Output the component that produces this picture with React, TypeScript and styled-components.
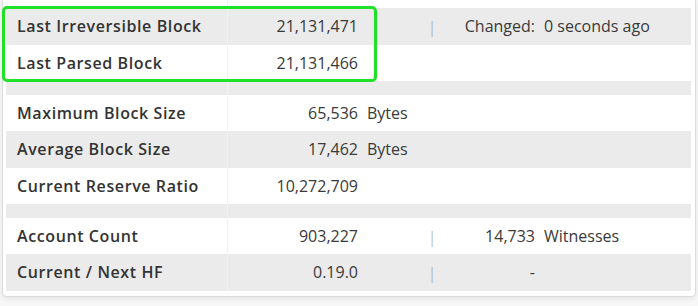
import * as React from 'react';
import styled, { createGlobalStyle } from 'styled-components';

const GlobalStyle = createGlobalStyle`
    body {
        margin: 0;
        background: #f7f7f7;
        font-family: 'Open Sans', 'Liberation Sans', sans-serif;
    }
`;

const Page = styled.div`
    position: relative;
    width: 698px;
    height: 306px;
    overflow: hidden;
    background: #f7f7f7;
`;

const Card = styled.div`
    margin-left: 2px;
    width: 685px;
    background: #fff;
    border: 1px solid #dcdcdc;
    border-top: none;
    border-radius: 0 0 5px 5px;
    box-shadow: 0 2px 4px rgba(0, 0, 0, 0.08);
    padding: 0 4px 5px 3px;
`;

const Row = styled.div<{ $shade?: boolean; $height?: number }>`
    display: grid;
    grid-template-columns: 222px 136px 60px 16px 100px 1fr;
    align-items: center;
    height: ${p => p.$height ?? 36.5}px;
    background: ${p => (p.$shade ? '#ebebeb' : '#fff')};
    font-size: 16px;
    color: #3a3a3a;
`;

const Label = styled.div`
    height: 100%;
    display: flex;
    align-items: center;
    padding-left: 11px;
    font-weight: 600;
    letter-spacing: 0.6px;
    color: #333;
    border-right: 1px solid #f2f2f2;
`;

const Value = styled.div`
    text-align: right;
    padding-right: 6px;
    white-space: nowrap;
`;

const Unit = styled.div`
    padding-left: 3px;
    white-space: nowrap;
`;

const Sep = styled.div`
    text-align: center;
    color: #a0a0a0;
    font-weight: 300;
    padding-top: 2px;
`;

const Value2 = styled.div`
    text-align: right;
    padding-right: 5px;
    white-space: nowrap;
`;

const Unit2 = styled.div`
    padding-left: 4px;
    white-space: nowrap;
`;

const Highlight = styled.div`
    position: absolute;
    left: 2px;
    top: 6px;
    width: 369px;
    height: 70px;
    border: 3px solid #20e028;
    border-radius: 5px;
    pointer-events: none;
`;

interface Item {
    label?: string;
    value?: string;
    unit?: string;
    sep?: boolean;
    value2?: string;
    unit2?: string;
    spacer?: boolean;
}

const items: Item[] = [
    { label: 'Last Irreversible Block', value: '21,131,471', sep: true, value2: 'Changed:', unit2: '0 seconds ago' },
    { label: 'Last Parsed Block', value: '21,131,466' },
    { spacer: true },
    { label: 'Maximum Block Size', value: '65,536', unit: 'Bytes' },
    { label: 'Average Block Size', value: '17,462', unit: 'Bytes' },
    { label: 'Current Reserve Ratio', value: '10,272,709' },
    { spacer: true },
    { label: 'Account Count', value: '903,227', sep: true, value2: '14,733', unit2: 'Witnesses' },
    { label: 'Current / Next HF', value: '0.19.0', sep: true, value2: '-' },
];

export default function App() {
    return (
        <Page>
            <GlobalStyle />
            <Card>
                <Row $height={8}>
                    <Label />
                </Row>
                {items.map((el, index) =>
                    el.spacer ? (
                        <Row key={index} $shade $height={13.5}>
                            <Label />
                        </Row>
                    ) : (
                        <Row key={index} $shade={index % 4 === 0}>
                            <Label>{el.label}</Label>
                            <Value>{el.value}</Value>
                            <Unit>{el.unit}</Unit>
                            <Sep>{el.sep ? '|' : ''}</Sep>
                            <Value2>{el.value2}</Value2>
                            <Unit2>{el.unit2}</Unit2>
                        </Row>
                    ),
                )}
            </Card>
            <Highlight />
        </Page>
    );
}
